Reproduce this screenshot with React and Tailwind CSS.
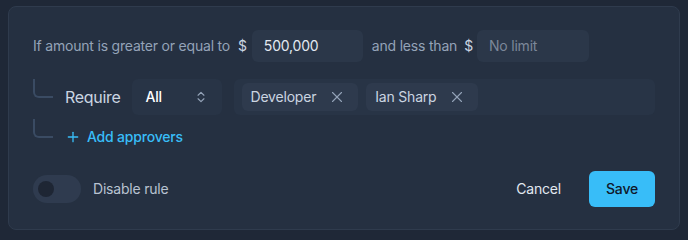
import { ChevronsUpDown, X, Plus } from "lucide-react";

const Tag = ({ label }) => (
  <div className="flex h-7 items-center rounded-md bg-[#2e3a4d] pl-[9px] pr-[12px] text-sm text-[#cbd5e1]">
    <span>{label}</span>
    <X size={18} strokeWidth={1.5} className="ml-[12px] text-[#94a3b8]" />
  </div>
);

const Connector = () => (
  <div className="h-[19px] w-[20px] shrink-0 rounded-bl-md border-b-2 border-l-2 border-[#3a4b63]" />
);

export default function App() {
  return (
    <div className="min-h-screen bg-[#1f2837] px-2 py-[6px] font-['Inter',sans-serif] tracking-[-0.2px]">
      <div className="rounded-lg border border-[#2f3b4d] bg-[#253041] px-6 pb-[22px] pt-[23px]">
        {/* Amount range */}
        <div className="flex h-8 items-center text-sm">
          <span className="text-[#94a3b8]">If amount is greater or equal to</span>
          <span className="ml-[8px] text-[#cbd5e1]">$</span>
          <div className="ml-[5px] flex h-8 w-[111px] items-center rounded-md bg-[#2b3749] px-3 text-[#e2e8f0]">
            500,000
          </div>
          <span className="ml-[9px] text-[#94a3b8]">and less than</span>
          <span className="ml-[7px] text-[#cbd5e1]">$</span>
          <div className="ml-[4px] flex h-8 w-[112px] items-center rounded-md bg-[#2b3749] px-3 text-[#7c8799]">
            No limit
          </div>
        </div>

        {/* Approvers */}
        <div className="mt-[17px] flex items-start">
          <Connector />
          <div className="flex h-9 flex-1 items-center">
            <span className="ml-[12px] text-base tracking-[-0.3px] text-[#cbd5e1]">Require</span>
            <div className="ml-[11px] flex h-9 w-[90px] items-center justify-between rounded-md bg-[#283446] pl-[14px] pr-[14px] text-sm font-medium text-white">
              All
              <ChevronsUpDown size={14} className="text-[#94a3b8]" />
            </div>
            <div className="ml-3 flex h-9 flex-1 items-center gap-2 rounded-md bg-[#283446] px-2">
              <Tag label="Developer" />
              <Tag label="Ian Sharp" />
            </div>
          </div>
        </div>

        <div className="mt-1 flex items-start">
          <Connector />
          <button className="ml-[12px] mt-2 flex h-5 items-center gap-1.5 text-sm font-medium text-[#38bdf8]">
            <Plus size={16} />
            Add approvers
          </button>
        </div>

        {/* Footer */}
        <div className="mt-6 flex h-9 items-center justify-between">
          <div className="flex items-center">
            <div className="flex h-7 w-12 items-center rounded-full bg-[#2f3b4f] pl-[5px]">
              <div className="h-4 w-4 rounded-full bg-[#1e2634]" />
            </div>
            <span className="ml-3 text-sm text-[#b9c3d1]">Disable rule</span>
          </div>
          <div className="flex items-center">
            <button className="h-9 px-4 text-sm text-[#e2e8f0]">Cancel</button>
            <button className="ml-3 h-9 w-[66px] rounded-md bg-[#38bdf8] text-sm font-medium text-[#0f172a]">
              Save
            </button>
          </div>
        </div>
      </div>
    </div>
  );
}
